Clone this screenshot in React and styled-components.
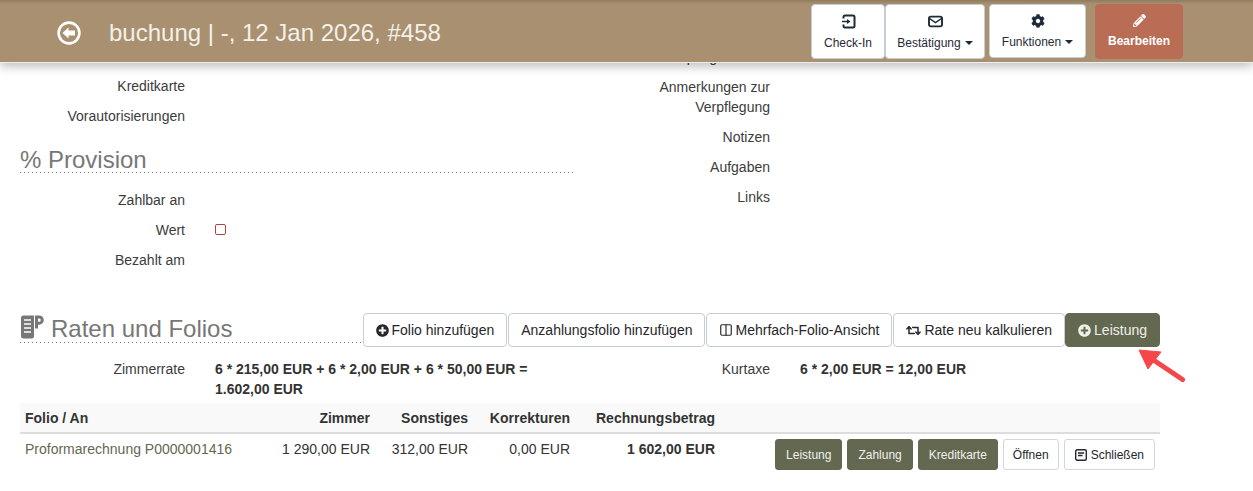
import React from 'react'
import styled, { createGlobalStyle } from 'styled-components'
import { FaCog, FaPencilAlt, FaPlusCircle, FaRetweet } from 'react-icons/fa'
import { LuColumns2 } from 'react-icons/lu'

const GlobalStyle = createGlobalStyle`
    html, body {
        margin: 0;
        padding: 0;
        height: 491px;
        overflow: hidden;
        background: #fff;
        font-family: "Liberation Sans", Arial, sans-serif;
        font-size: 14px;
        color: #333;
    }
`

const dots = `
    background-image: repeating-linear-gradient(to right, #777 0, #777 1px, transparent 1px, transparent 4px);
    background-position: left bottom;
    background-size: 100% 1px;
    background-repeat: no-repeat;
`

const Page = styled.div`
    position: relative;
    width: 1253px;
    height: 491px;
    overflow: hidden;
`

const Header = styled.header`
    position: relative;
    z-index: 2;
    box-sizing: border-box;
    height: 63px;
    display: flex;
    align-items: flex-start;
    justify-content: space-between;
    padding: 4px 70px 0 57px;
    background: linear-gradient(#8f7b60 0, #a89070 4px);
    border-bottom: 1px solid #eee;
    box-shadow: 0 3px 10px rgba(0, 0, 0, 0.28);
`

const TitleGroup = styled.div`
    display: flex;
    align-items: center;
    gap: 28px;
    height: 57px;
    color: #f3f0ea;
    font-size: 24px;
`

const HeaderActions = styled.div`
    display: flex;
    align-items: flex-start;
`

const HeaderButton = styled.button`
    box-sizing: border-box;
    width: ${p => p.$w}px;
    height: ${p => p.$h || 55}px;
    margin-left: ${p => p.$ml || 0}px;
    display: flex;
    flex-direction: column;
    align-items: center;
    padding: 9px 0 0;
    gap: 7px;
    background: ${p => p.$edit ? '#b96d54' : '#fff'};
    border: 1px solid ${p => p.$edit ? '#b96d54' : '#c5ced8'};
    border-radius: 4px;
    color: ${p => p.$edit ? '#fff' : '#1f2a38'};
    font: ${p => p.$edit ? 'bold' : 'normal'} 12px "Liberation Sans", Arial, sans-serif;
`

const Caret = styled.span`
    display: inline-block;
    margin-left: 4px;
    vertical-align: 2px;
    border-top: 4px solid currentColor;
    border-left: 4px solid transparent;
    border-right: 4px solid transparent;
`

const Main = styled.main`
    margin-top: -20px;
    padding: 0 0 0 20px;
`

const Columns = styled.div`
    display: grid;
    grid-template-columns: 585px 1fr;
    height: 270px;
`

const Column = styled.div`
    padding-top: ${p => p.$pt || 0}px;
`

const Row = styled.div`
    display: grid;
    grid-template-columns: 165px 1fr;
    column-gap: 30px;
    padding-bottom: 10px;
    line-height: 20px;
    width: 555px;
`

const Label = styled.div`
    text-align: right;
    color: #3c3c3c;
`

const Value = styled.div`
    font-weight: ${p => p.$bold ? 'bold' : 'normal'};
`

const SectionTitle = styled.h3`
    box-sizing: border-box;
    width: 556px;
    height: 26px;
    margin: 11px 0 17px;
    font-size: 24px;
    font-weight: normal;
    line-height: 26px;
    color: #777;
    ${dots}
`

const Checkbox = styled.span`
    display: block;
    box-sizing: border-box;
    width: 11px;
    height: 11px;
    margin-top: 4px;
    border: 1px solid #a94442;
    border-radius: 2px;
`

const RatesHead = styled.div`
    display: flex;
    align-items: flex-end;
    width: 1140px;
    height: 34px;
`

const RatesTitle = styled.h3`
    flex: 1;
    display: flex;
    align-items: flex-start;
    gap: 7px;
    box-sizing: border-box;
    height: 28px;
    margin: 0 0 4px;
    font-size: 24px;
    font-weight: normal;
    line-height: 28px;
    color: #777;
    ${dots}

    svg {
        flex: none;
    }
`

const Btn = styled.button`
    box-sizing: border-box;
    height: 34px;
    padding: 0 12px;
    margin-left: ${p => p.$dark ? 0 : 1}px;
    display: inline-flex;
    align-items: center;
    gap: ${p => p.$gap || 3}px;
    background: ${p => p.$dark ? '#636850' : '#fff'};
    border: 1px solid ${p => p.$dark ? '#636850' : '#c5ced8'};
    border-radius: 4px;
    color: ${p => p.$dark ? '#f0f0ea' : '#26262b'};
    font: 14px "Liberation Sans", Arial, sans-serif;
`

const RatesInfo = styled.div`
    display: grid;
    grid-template-columns: 585px 1fr;
    width: 1140px;
    height: 56px;
    padding-top: 12px;
    box-sizing: border-box;
`

const RateValue = styled(Value)`
    width: 340px;
`

const TableRow = styled.div`
    display: grid;
    grid-template-columns: 255px 100px 98px 102px 145px 1fr;
    width: 1140px;
    background: ${p => p.$head ? '#f9f9f9' : 'transparent'};
    border-bottom: ${p => p.$head ? '2px solid #ddd' : 'none'};
    height: ${p => p.$head ? 31 : 36}px;
    box-sizing: border-box;
    font-weight: ${p => p.$head ? 'bold' : 'normal'};
    align-items: ${p => p.$head ? 'center' : 'start'};
    line-height: 20px;
`

const Cell = styled.div`
    padding: ${p => p.$pad ? '5px 5px 0' : '0 5px'};
    text-align: ${p => p.$left ? 'left' : 'right'};
    white-space: nowrap;
    font-weight: ${p => p.$bold ? 'bold' : 'inherit'};
    color: ${p => p.$link ? '#636850' : 'inherit'};
`

const RowActions = styled.div`
    display: flex;
    justify-content: flex-end;
    gap: 5px;
    padding: 5px 5px 0 0;
`

const SmallBtn = styled.button`
    box-sizing: border-box;
    height: 31px;
    padding: 0 ${p => p.$px || 10}px;
    display: inline-flex;
    align-items: center;
    gap: 4px;
    background: ${p => p.$dark ? '#636850' : '#fff'};
    border: 1px solid ${p => p.$dark ? '#636850' : '#d0d6dc'};
    border-radius: 3px;
    color: ${p => p.$dark ? '#f0f0ea' : '#26262b'};
    font: 12px "Liberation Sans", Arial, sans-serif;
`

const Arrow = styled.svg`
    position: absolute;
    left: 1136px;
    top: 346px;
`

const BackIcon = () => (
    <svg width="24" height="24" viewBox="0 0 24 24">
        <circle cx="12" cy="12" r="10.4" fill="none" stroke="#fff" strokeWidth="2.6" />
        <path d="M5.5 12 L11.5 6.5 V9.5 H18 V14.5 H11.5 V17.5 Z" fill="#fff" />
    </svg>
)

const CheckInIcon = () => (
    <svg width="15" height="15" viewBox="0 0 15 15" fill="none" stroke="#1f2a38" strokeWidth="2">
        <path d="M2.5 4.5V3A1.5 1.5 0 0 1 4 1.5H12A1.5 1.5 0 0 1 13.5 3V12A1.5 1.5 0 0 1 12 13.5H4A1.5 1.5 0 0 1 2.5 12V10.5" />
        <path d="M1 7.5H8" strokeWidth="1.5" />
        <path d="M6 5L9.5 7.5L6 10Z" fill="#1f2a38" stroke="none" />
    </svg>
)

const EnvelopeIcon = () => (
    <svg width="15" height="15" viewBox="0 0 15 15" fill="none" stroke="#1f2a38" strokeWidth="1.9">
        <rect x="1" y="2.6" width="13" height="9.8" rx="1.8" />
        <path d="M1.5 4.5L7.5 8.6L13.5 4.5" strokeWidth="1.5" />
    </svg>
)

const FolioIcon = () => (
    <svg width="24" height="24" viewBox="0 0 24 24">
        <path d="M1 3A2.5 2.5 0 0 1 3.5 .5H14V21A2.5 2.5 0 0 1 11.5 23.5H3.5A2.5 2.5 0 0 1 1 21Z" fill="#777" />
        <path d="M4 5H11M4 9H11M4 13H11M4 17H11" stroke="#fff" strokeWidth="1.5" />
        <path d="M15 13.5V.5H19.2A4.6 4.6 0 0 1 19.2 9.7H18V13.5Z M18 3.5V6.7H19.2A1.6 1.6 0 0 0 19.2 3.5Z" fill="#777" fillRule="evenodd" />
    </svg>
)

const NoteIcon = () => (
    <svg width="12" height="12" viewBox="0 0 12 12">
        <rect x="0.7" y="0.7" width="10.6" height="10.6" rx="1.5" fill="none" stroke="#26262b" strokeWidth="1.4" />
        <path d="M3 4H9M3 6.5H7.5" stroke="#26262b" strokeWidth="1.3" />
    </svg>
)

const App = () => (
    <Page>
        <GlobalStyle />
        <Header>
            <TitleGroup>
                <BackIcon />
                <span>buchung | -, 12 Jan 2026, #458</span>
            </TitleGroup>
            <HeaderActions>
                <HeaderButton $w={74}>
                    <CheckInIcon />
                    Check-In
                </HeaderButton>
                <HeaderButton $w={100}>
                    <EnvelopeIcon />
                    <span>Bestätigung<Caret /></span>
                </HeaderButton>
                <HeaderButton $w={97} $h={54} $ml={4}>
                    <FaCog size={14} />
                    <span>Funktionen<Caret /></span>
                </HeaderButton>
                <HeaderButton $w={88} $ml={9} $edit>
                    <FaPencilAlt size={13} />
                    Bearbeiten
                </HeaderButton>
            </HeaderActions>
        </Header>
        <Main>
            <Columns>
                <Column $pt={33}>
                    <Row><Label>Kreditkarte</Label><Value /></Row>
                    <Row><Label>Vorautorisierungen</Label><Value /></Row>
                    <SectionTitle>% Provision</SectionTitle>
                    <Row><Label>Zahlbar an</Label><Value /></Row>
                    <Row><Label>Wert</Label><Value><Checkbox /></Value></Row>
                    <Row><Label>Bezahlt am</Label><Value /></Row>
                </Column>
                <Column $pt={4}>
                    <Row><Label>Verpflegte Gäste</Label><Value /></Row>
                    <Row><Label>Anmerkungen zur Verpflegung</Label><Value /></Row>
                    <Row><Label>Notizen</Label><Value /></Row>
                    <Row><Label>Aufgaben</Label><Value /></Row>
                    <Row><Label>Links</Label><Value /></Row>
                </Column>
            </Columns>
            <RatesHead>
                <RatesTitle><FolioIcon />Raten und Folios</RatesTitle>
                <Btn $gap={2}><FaPlusCircle size={13} />Folio hinzufügen</Btn>
                <Btn>Anzahlungsfolio hinzufügen</Btn>
                <Btn $gap={2}><LuColumns2 size={14} />Mehrfach-Folio-Ansicht</Btn>
                <Btn><FaRetweet size={15} />Rate neu kalkulieren</Btn>
                <Btn $dark><FaPlusCircle size={13} />Leistung</Btn>
            </RatesHead>
            <RatesInfo>
                <Row>
                    <Label>Zimmerrate</Label>
                    <RateValue $bold>6 * 215,00 EUR + 6 * 2,00 EUR + 6 * 50,00 EUR = 1.602,00 EUR</RateValue>
                </Row>
                <Row>
                    <Label>Kurtaxe</Label>
                    <Value $bold>6 * 2,00 EUR = 12,00 EUR</Value>
                </Row>
            </RatesInfo>
            <TableRow $head>
                <Cell $left>Folio / An</Cell>
                <Cell>Zimmer</Cell>
                <Cell>Sonstiges</Cell>
                <Cell>Korrekturen</Cell>
                <Cell>Rechnungsbetrag</Cell>
            </TableRow>
            <TableRow>
                <Cell $left $link $pad>Proformarechnung P0000001416</Cell>
                <Cell $pad>1 290,00 EUR</Cell>
                <Cell $pad>312,00 EUR</Cell>
                <Cell $pad>0,00 EUR</Cell>
                <Cell $pad $bold>1 602,00 EUR</Cell>
                <RowActions>
                    <SmallBtn $dark>Leistung</SmallBtn>
                    <SmallBtn $dark>Zahlung</SmallBtn>
                    <SmallBtn $dark>Kreditkarte</SmallBtn>
                    <SmallBtn $px={9}>Öffnen</SmallBtn>
                    <SmallBtn><NoteIcon />Schließen</SmallBtn>
                </RowActions>
            </TableRow>
        </Main>
        <Arrow width="52" height="40" viewBox="0 0 52 40">
            <path d="M46.5 33.5 L16 13" stroke="#f5474a" strokeWidth="5" strokeLinecap="round" />
            <path d="M3 4 L25 6 L12 23 Z" fill="#f5474a" stroke="#f5474a" strokeWidth="1" strokeLinejoin="round" />
        </Arrow>
    </Page>
)

export default App
